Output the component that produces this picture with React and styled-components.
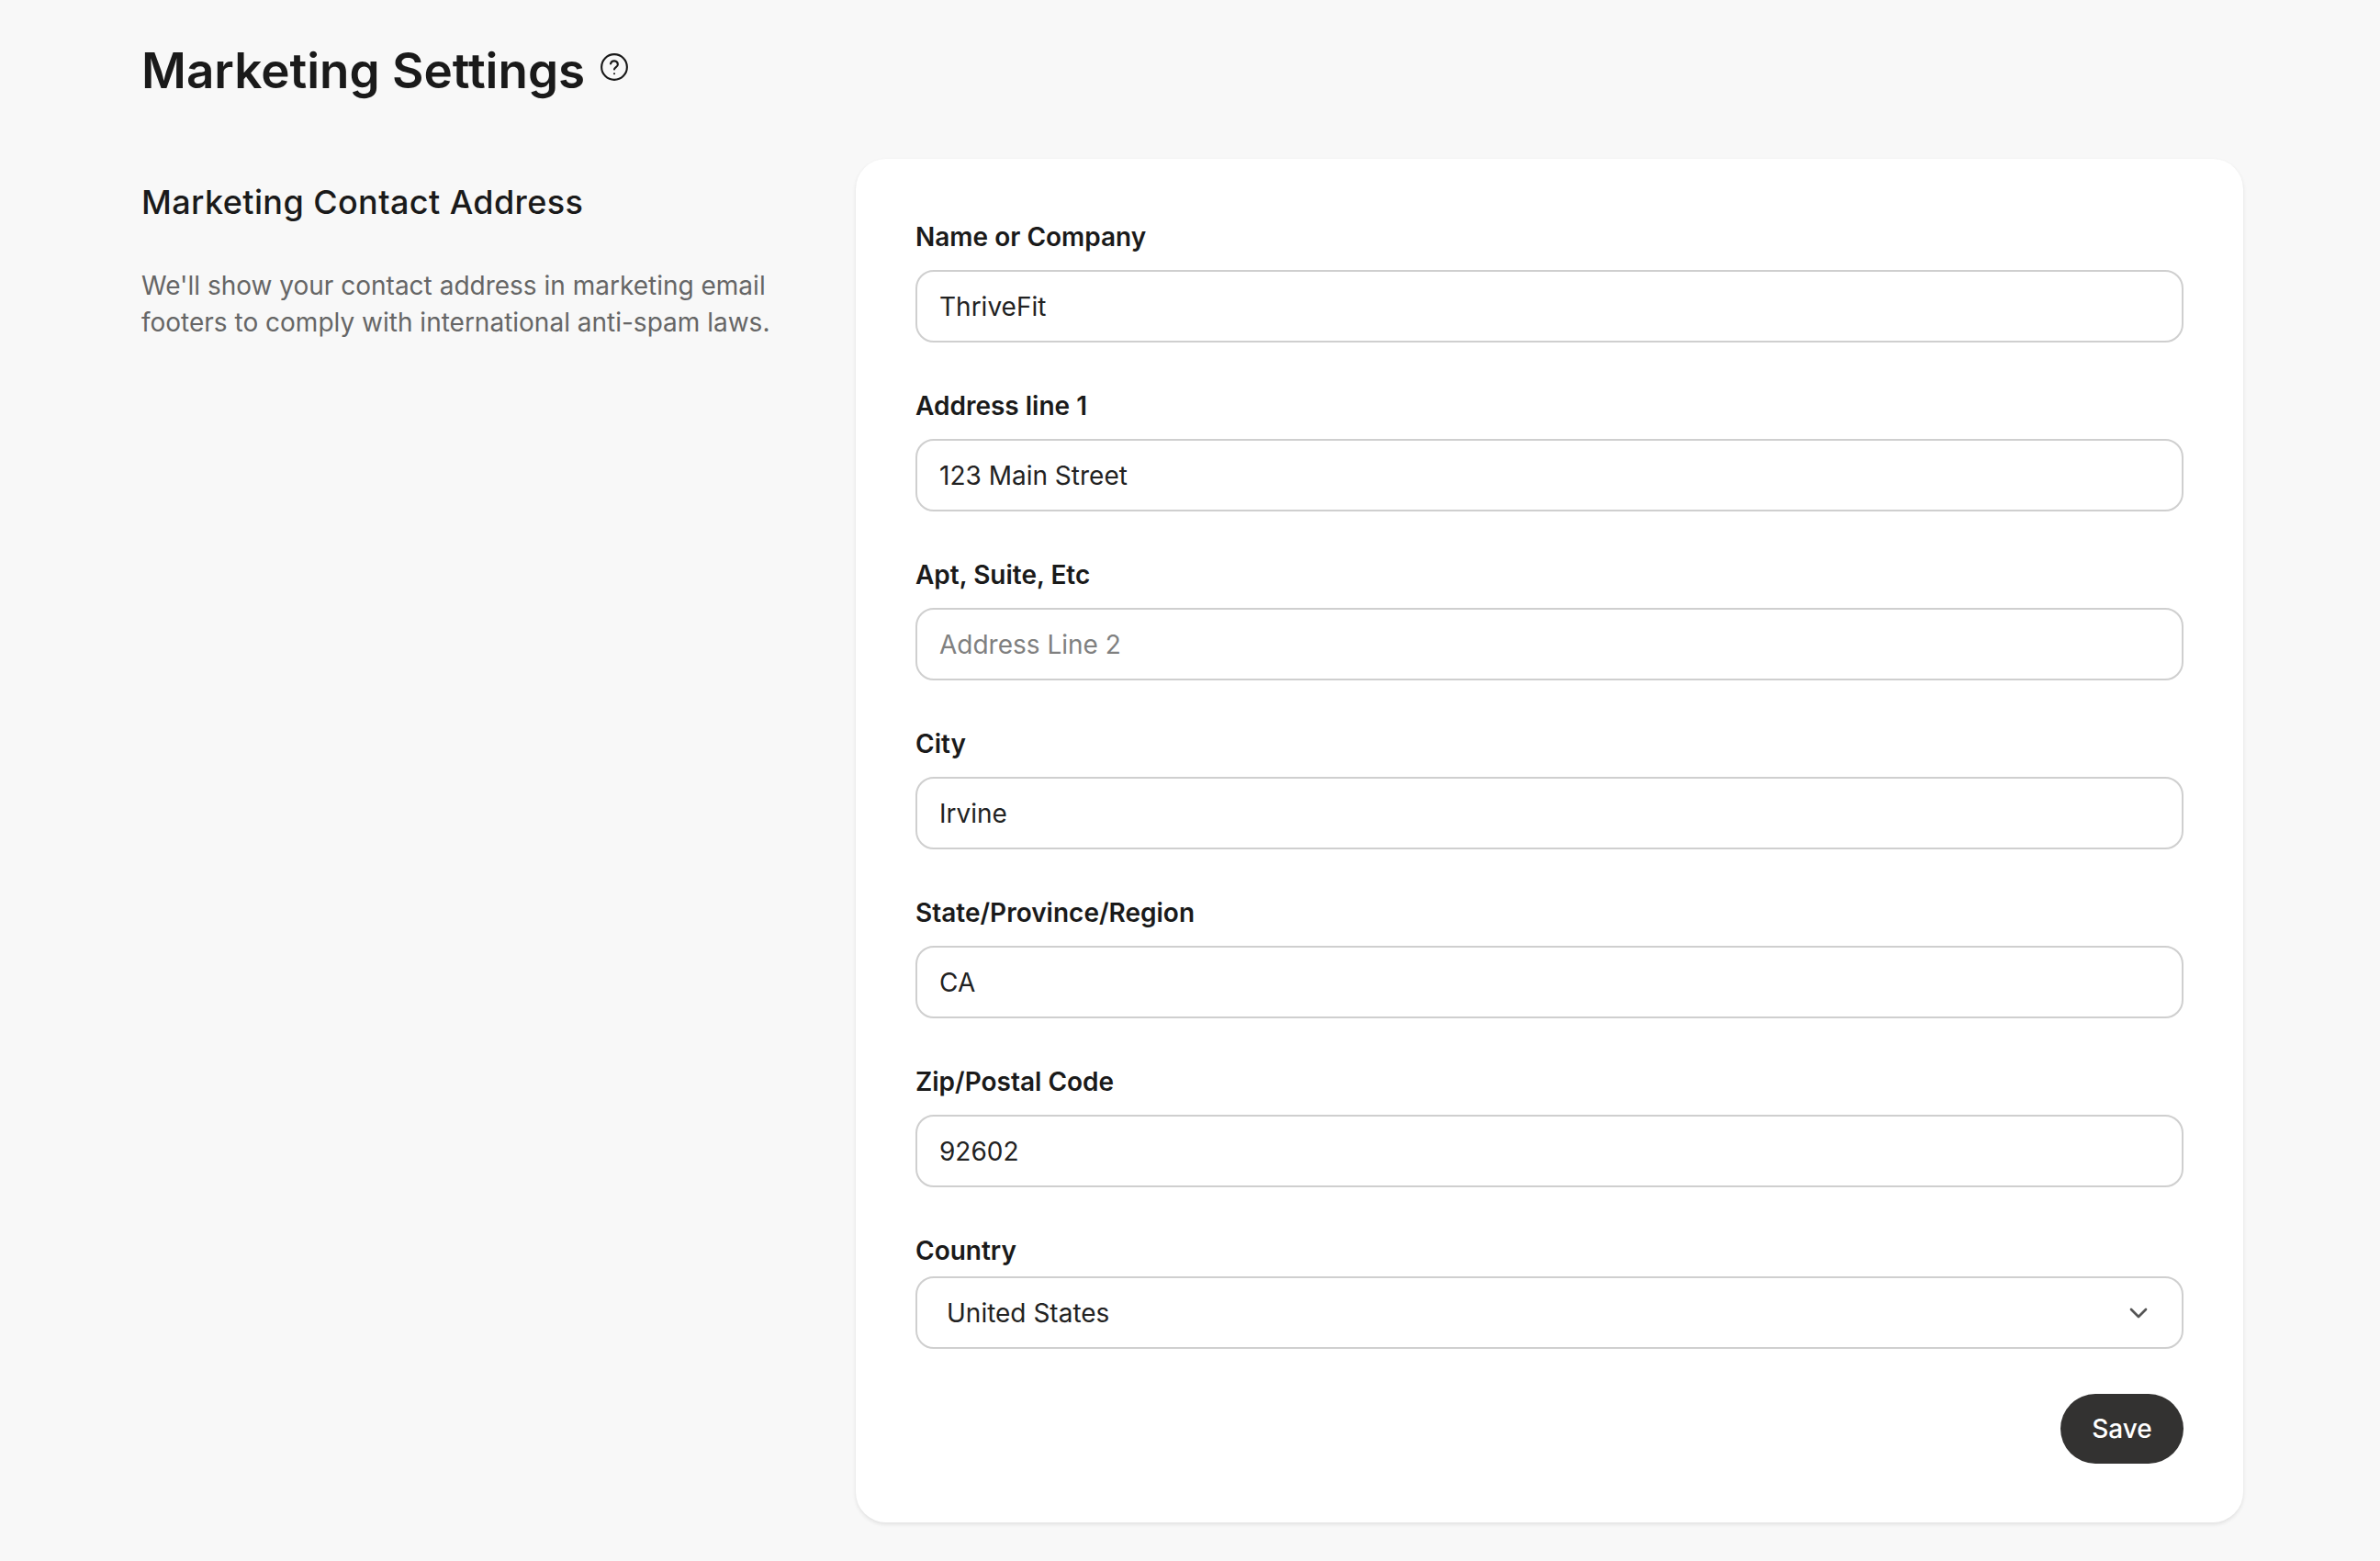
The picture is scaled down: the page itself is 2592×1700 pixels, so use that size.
import React from "react";
import styled, { createGlobalStyle } from "styled-components";
import { ChevronDown } from "lucide-react";

const GlobalStyle = createGlobalStyle`
  html, body {
    margin: 0;
    background: #f8f8f8;
  }
  body {
    font-family: Inter, "Liberation Sans", sans-serif;
    color: #1a1a1a;
  }
`;

const fields = [
  { label: "Name or Company", value: "ThriveFit" },
  { label: "Address line 1", value: "123 Main Street" },
  { label: "Apt, Suite, Etc", placeholder: "Address Line 2" },
  { label: "City", value: "Irvine" },
  { label: "State/Province/Region", value: "CA" },
  { label: "Zip/Postal Code", value: "92602" },
];

const HelpIcon = () => (
  <svg width="32" height="32" viewBox="0 0 24 24" fill="none" stroke="#1a1a1a" strokeWidth="1.6" strokeLinecap="round">
    <circle cx="12" cy="12" r="10.4" />
    <path d="M9 9.3a3 3 0 0 1 5.9.6c0 1.9-2.9 2.3-2.9 4" />
    <path d="M12 17.4h.01" />
  </svg>
);

const App = () => {
  return (
    <Page>
      <GlobalStyle />
      <Header>
        <Title>Marketing Settings</Title>
        <HelpButton>
          <HelpIcon />
        </HelpButton>
      </Header>
      <Columns>
        <Intro>
          <SectionTitle>Marketing Contact Address</SectionTitle>
          <Description>
            We'll show your contact address in marketing email
            <br />
            footers to comply with international anti-spam laws.
          </Description>
        </Intro>
        <Card>
          {fields.map((field) => (
            <Field key={field.label}>
              <Label>{field.label}</Label>
              <Input readOnly value={field.value || ""} placeholder={field.placeholder} />
            </Field>
          ))}
          <SelectField>
            <SelectLabel>Country</SelectLabel>
            <Select>
              <span>United States</span>
              <ChevronDown size={32} color="#555" strokeWidth={2} />
            </Select>
          </SelectField>
          <Actions>
            <SaveButton>Save</SaveButton>
          </Actions>
        </Card>
      </Columns>
    </Page>
  );
};

const Page = styled.div`
  width: 2592px;
  min-height: 1700px;
  box-sizing: border-box;
  padding: 43px 149px 0 154px;
`;

const Header = styled.header`
  display: flex;
  align-items: flex-start;
  height: 130px;
`;

const Title = styled.h1`
  margin: 0;
  font-size: 53px;
  line-height: 68px;
  font-weight: 600;
  color: #1a1a1a;
`;

const HelpButton = styled.span`
  display: flex;
  margin: 14px 0 0 16px;
`;

const Columns = styled.div`
  display: flex;
  align-items: flex-start;
`;

const Intro = styled.div`
  width: 778px;
  flex-shrink: 0;
  padding-top: 21px;
`;

const SectionTitle = styled.h2`
  margin: 0;
  font-size: 36px;
  line-height: 52px;
  font-weight: 450;
  letter-spacing: 0.4px;
  color: #1a1a1a;
`;

const Description = styled.p`
  margin: 45px 0 0;
  font-size: 28px;
  line-height: 40px;
  font-weight: 400;
  color: #666;
`;

const Card = styled.section`
  flex: 1;
  box-sizing: border-box;
  height: 1485px;
  padding: 65px 65px;
  background: #fff;
  border-radius: 33px;
  box-shadow: 0 2px 4px rgba(0, 0, 0, 0.1);
`;

const Field = styled.div`
  margin-bottom: 49px;
`;

const SelectField = styled.div`
  margin-bottom: 49px;
`;

const Label = styled.label`
  display: block;
  margin-bottom: 16px;
  font-size: 28px;
  line-height: 40px;
  font-weight: 600;
  color: #1a1a1a;
`;

const SelectLabel = styled(Label)`
  margin-bottom: 8px;
`;

const Input = styled.input`
  display: block;
  width: 100%;
  height: 79px;
  box-sizing: border-box;
  padding: 0 24px;
  border: 2px solid #cfcfcf;
  border-radius: 20px;
  outline: none;
  background: #fff;
  font-family: inherit;
  font-size: 28px;
  color: #222;
  &::placeholder {
    color: #808080;
    opacity: 1;
  }
`;

const Select = styled.div`
  display: flex;
  align-items: center;
  justify-content: space-between;
  height: 79px;
  box-sizing: border-box;
  padding: 0 31px 0 32px;
  border: 2px solid #cfcfcf;
  border-radius: 20px;
  font-size: 28px;
  color: #222;
`;

const Actions = styled.div`
  display: flex;
  justify-content: flex-end;
`;

const SaveButton = styled.button`
  width: 134px;
  height: 76px;
  border: none;
  border-radius: 38px;
  background: #333231;
  color: #fff;
  font-family: inherit;
  font-size: 28px;
  font-weight: 500;
`;

export default App;
